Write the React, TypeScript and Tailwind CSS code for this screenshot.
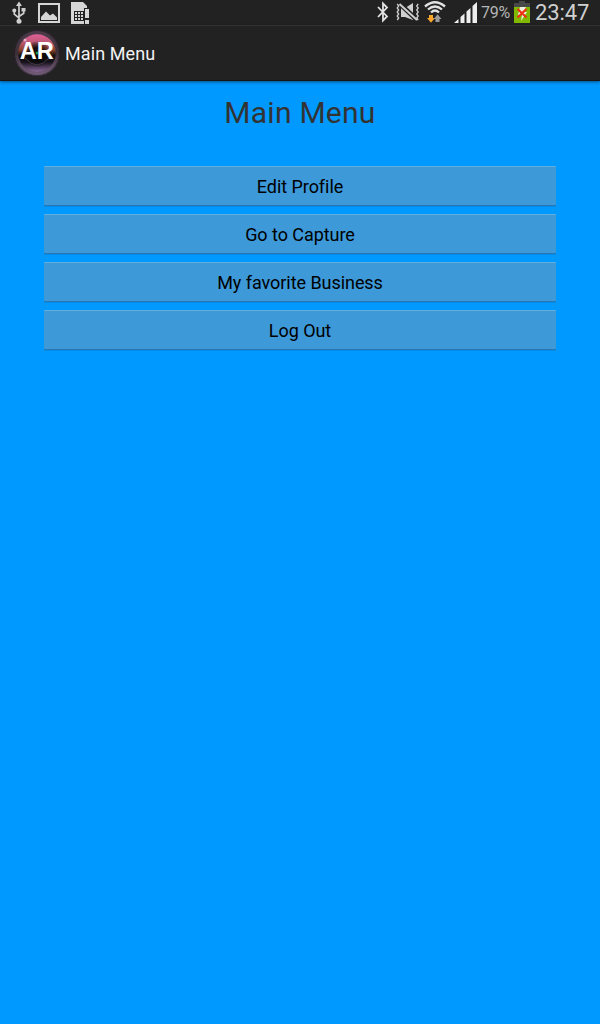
import React from "react";

const UsbIcon = () => (
  <svg className="ml-3 shrink-0" width="14" height="26" viewBox="0 0 14 26" fill="none" stroke="#cfcfcf" strokeWidth="1.7">
    <path d="M7 5v16M2.3 11v3.2L7 18M11.7 10v3.2L7 16.5" />
    <path d="M7 1.5l3 4.500H4zM9.500 8h4v3.500h-4z" fill="#cfcfcf" stroke="none" />
    <circle cx="2.3" cy="10.5" r="2" fill="#cfcfcf" stroke="none" />
    <circle cx="7" cy="21.3" r="2.5" fill="#cfcfcf" stroke="none" />
  </svg>
);

const PictureIcon = () => (
  <svg className="ml-3 shrink-0" width="22" height="26" viewBox="0 0 22 26">
    <rect x="1" y="4" width="20" height="18" fill="none" stroke="#d6d6d6" strokeWidth="2" />
    <path d="M3 20v-3l5-5.500 4 4 3-2 4 4V20z" fill="#d6d6d6" />
  </svg>
);

const SimIcon = () => (
  <svg className="ml-[11px] shrink-0" width="19" height="26" viewBox="0 0 19 26">
    <path d="M0 2h12l4 4v2h-3v16H0z" fill="#d6d6d6" />
    <path d="M3 11h10v10H3z" fill="#222" />
    <path d="M4 12h2v2H4zM7 12h2v2H7zM10 12h2v2h-2zM4 15h2v2H4zM7 15h2v2H7zM10 15h2v2h-2zM4 18h2v2H4zM7 18h2v2H7zM10 18h2v2h-2z" fill="#d6d6d6" />
    <path d="M13 8h6v16h-6z" fill="#222" />
    <path d="M14 9h4v9h-4zM14 20h4v4h-4z" fill="#d6d6d6" />
  </svg>
);

const BluetoothIcon = () => (
  <svg className="shrink-0" width="12" height="26" viewBox="0 0 12 26" fill="none" stroke="#e2e2e2" strokeWidth="1.8">
    <path d="M1 7l9 9.500L6 20.500V3.500L10 7.500 1 17" />
  </svg>
);

const MuteIcon = () => (
  <svg className="ml-[7px] shrink-0" width="24" height="26" viewBox="0 0 24 26">
    <path d="M5 8v9h4l8 3V3L9 8z" fill="#cfcfcf" />
    <path d="M3 3l18 17" stroke="#222" strokeWidth="4.800" />
    <path d="M3.500 4l17.500 16" stroke="#cfcfcf" strokeWidth="2" />
    <path d="M1.200 4l1.500 2-1.500 2 1.500 2-1.500 2 1.500 2-1.500 2 1.500 2-1.500 2M22.200 4l-1.500 2 1.500 2-1.500 2 1.500 2-1.500 2 1.500 2-1.500 2 1.500 2" fill="none" stroke="#cfcfcf" strokeWidth="1.300" />
  </svg>
);

const WifiIcon = () => (
  <svg className="ml-1 shrink-0" width="22" height="26" viewBox="0 0 22 26">
    <g fill="none" stroke="#e2e2e2" strokeWidth="2.300">
      <path d="M1 6.500Q11-2 21 6.500" />
      <path d="M4 9.500Q11 3.500 18 9.500" />
      <path d="M7 12.500Q11 8.500 15 12.500" />
    </g>
    <path d="M5 15h4v3h2l-4 4.800L3 18h2z" fill="#f5a52b" />
    <path d="M11.500 22h4v-3h2l-4-4.800L9.800 19h1.700z" fill="#999" />
  </svg>
);

const SignalIcon = () => (
  <svg className="ml-2 shrink-0" width="24" height="26" viewBox="0 0 24 26" fill="#eee">
    <path d="M0 23l4.500-4v4zM6.500 17l4-3.500V23h-4zM12.500 11.500l4-3.500v15h-4zM18.500 6l4.500-4v21h-4.500z" />
  </svg>
);

const BatteryIcon = () => (
  <svg className="ml-1 shrink-0" width="16" height="26" viewBox="0 0 16 26">
    <path d="M5 1h6v2h5v4H0V3h5z" fill="#484848" />
    <path d="M0 7h16v16H0z" fill="#81b900" />
    <path d="M6 7h6l-2 5h3l-6 9 1-6H4z" fill="#eeeedc" />
    <path d="M3.500 9l9 8.500M12.500 9l-9 8.500" stroke="#ed3010" strokeWidth="2.200" />
  </svg>
);

const AppIcon = () => (
  <svg className="ml-[13px] shrink-0" width="48" height="48" viewBox="0 0 48 48">
    <defs>
      <linearGradient id="rim" x2="0" y2="1">
        <stop offset="0" stopColor="#4c3c4b" />
        <stop offset=".5" stopColor="#3c3038" />
        <stop offset="1" stopColor="#755e7b" />
      </linearGradient>
      <linearGradient id="lens" x2="0" y2="1">
        <stop offset="0" stopColor="#df5e97" />
        <stop offset=".2" stopColor="#c05a78" />
        <stop offset=".42" stopColor="#8c442c" />
        <stop offset=".56" stopColor="#17110f" />
        <stop offset=".74" stopColor="#15111a" />
        <stop offset="1" stopColor="#8b6798" />
      </linearGradient>
      <radialGradient id="core">
        <stop offset=".5" stopColor="#080808" stopOpacity=".9" />
        <stop offset="1" stopColor="#080808" stopOpacity=".15" />
      </radialGradient>
    </defs>
    <circle cx="24" cy="24" r="23" fill="url(#rim)" />
    <circle cx="24" cy="24" r="22.500" fill="none" stroke="#16131a" strokeOpacity=".65" />
    <circle cx="24" cy="24" r="18.800" fill="url(#lens)" />
    <circle cx="24" cy="25" r="12.500" fill="url(#core)" />
    <path d="M12 29q12 14 24 0" fill="none" stroke="#403b42" strokeWidth="1" />
    <circle cx="24" cy="24" r="1.500" fill="#188c3a" />
    <circle cx="12" cy="11" r="1.500" fill="#efc2cf" fillOpacity=".8" />
    <text x="23.800" y="30" textAnchor="middle" textLength="34" lengthAdjust="spacingAndGlyphs" fontFamily="Liberation Sans, sans-serif" fontWeight="700" fontSize="23" fill="#fff">AR</text>
  </svg>
);

const items = ["Edit Profile", "Go to Capture", "My favorite Business", "Log Out"];

export default function App() {
  return (
    <div className="flex h-[1024px] w-[600px] flex-col overflow-hidden bg-[#0099ff] font-[Roboto,sans-serif]">
      <div className="flex h-[25px] shrink-0 items-start bg-[#222222]">
        <UsbIcon />
        <PictureIcon />
        <SimIcon />
        <div className="ml-auto flex w-[223px] items-start">
          <BluetoothIcon />
          <MuteIcon />
          <WifiIcon />
          <SignalIcon />
          <span className="ml-[3px] w-[29px] whitespace-nowrap text-[16px] leading-[26px] tracking-[-0.2px] text-[#b5b5b5]">79%</span>
          <BatteryIcon />
          <span className="ml-[5px] whitespace-nowrap text-[22px] leading-[26px] tracking-[-0.1px] text-[#d0d0d0]">23:47</span>
        </div>
      </div>
      <header className="flex h-14 shrink-0 items-center border-t border-[#333333] border-b border-b-[#161616] bg-[#222222] shadow-[0_1px_3px_rgba(0,0,0,0.5)]">
        <AppIcon />
        <span className="ml-1 pt-0.5 text-[18px] leading-6 tracking-[0.1px] text-[#f3f3f3]">Main Menu</span>
      </header>
      <main className="flex flex-col px-11">
        <h1 className="mt-3 text-center text-[30px] leading-10 tracking-[0.25px] text-[#333333]">Main Menu</h1>
        <div className="mt-[33px] flex flex-col gap-2">
          {items.map((label) => (
            <button key={label} className="h-10 rounded-[1px] border-t border-b border-t-[#64addf] border-b-[#2876ae] bg-[#3d99d8] pt-0.5 text-[18px] leading-6 tracking-[-0.05px] text-black shadow-[0_1px_0_rgba(0,0,0,0.08)]">
              {label}
            </button>
          ))}
        </div>
      </main>
    </div>
  );
}
